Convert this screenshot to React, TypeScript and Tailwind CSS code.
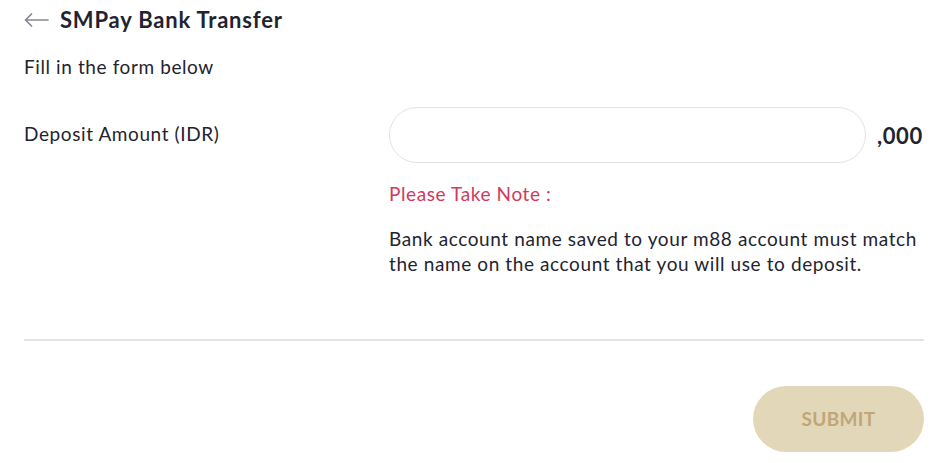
import React from "react";

export default function App() {
  return (
    <div
      className="w-[945px] h-[463px] bg-white text-[#1f2430] overflow-hidden"
      style={{ fontFamily: "Lato, 'Noto Sans', sans-serif" }}
    >
      <div className="pl-[24px] pr-[21px]">
        <div className="flex items-center h-[38px] pt-[2px]">
          <svg width="25" height="14" viewBox="0 0 25 14" className="text-[#868991]">
            <path d="M24 7H1.5M7.5 1L1.5 7l6 6" fill="none" stroke="currentColor" strokeWidth="1.7" strokeLinecap="round" strokeLinejoin="round" />
          </svg>
          <h1 className="ml-[11px] text-[22px] tracking-[0.8px] font-bold leading-none">SMPay Bank Transfer</h1>
        </div>
        <p className="mt-[17px] text-[19px] tracking-[0.6px] leading-[24px]">Fill in the form below</p>
        <div className="mt-[28px] flex">
          <div className="w-[365px] h-[56px] flex items-center text-[19px] tracking-[0.6px] pb-[1px]">Deposit Amount (IDR)</div>
          <div className="flex-1">
            <div className="flex items-center">
              <input
                className="w-[477px] h-[56px] rounded-full border border-[#e2e2e2] outline-none px-5"
                type="text"
              />
              <span className="ml-[11px] text-[22px] tracking-[0.6px] font-bold">,000</span>
            </div>
            <p className="mt-[18px] text-[19px] tracking-[0.6px] leading-[25px] text-[#d2395a]">Please Take Note :</p>
            <p className="mt-[20px] text-[19px] tracking-[0.6px] leading-[25px]">
              Bank account name saved to your m88 account must match
              <br />
              the name on the account that you will use to deposit.
            </p>
          </div>
        </div>
        <div className="mt-[63px] h-[2px] bg-[#e3e3e3]" />
        <div className="mt-[45px] flex justify-end">
          <button className="w-[171px] h-[66px] rounded-full bg-[#e3d7b9] text-[#c0a678] text-[19px] tracking-[0.3px] font-bold">
            SUBMIT
          </button>
        </div>
      </div>
    </div>
  );
}
